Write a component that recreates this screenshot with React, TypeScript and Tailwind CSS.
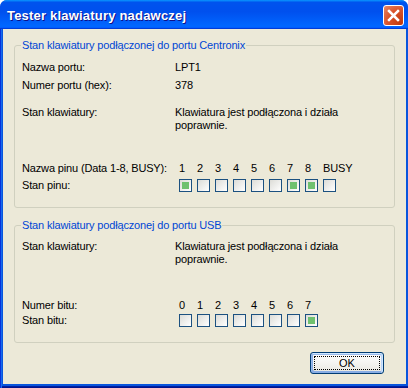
import React from "react";

function Box({ on }: { on: boolean }) {
  return (
    <div className="w-[13px] h-[13px] border border-[#1c5180] bg-[linear-gradient(135deg,#dcdcd7,#ffffff)] flex items-center justify-center">
      {on && <div className="w-[7px] h-[7px] bg-[#6fc16f]" />}
    </div>
  );
}

const pins = [
  { n: "1", on: true },
  { n: "2", on: false },
  { n: "3", on: false },
  { n: "4", on: false },
  { n: "5", on: false },
  { n: "6", on: false },
  { n: "7", on: true },
  { n: "8", on: true },
  { n: "BUSY", on: false },
];

const bits = [
  { n: "0", on: false },
  { n: "1", on: false },
  { n: "2", on: false },
  { n: "3", on: false },
  { n: "4", on: false },
  { n: "5", on: false },
  { n: "6", on: false },
  { n: "7", on: true },
];

function CellRow({ label, items, mode }: { label: string; items: { n: string; on: boolean }[]; mode: "names" | "boxes" }) {
  return (
    <div className="flex items-center h-[13px]">
      <div className="w-[157px] shrink-0 whitespace-nowrap">{label}</div>
      {items.map((it, i) => (
        <div key={i} className="w-[18px] shrink-0 whitespace-nowrap">
          {mode === "names" ? it.n : <Box on={it.on} />}
        </div>
      ))}
    </div>
  );
}

function Group({ title, heightClass, children, mtClass }: { title: string; heightClass: string; children: React.ReactNode; mtClass: string }) {
  return (
    <div className={`relative mx-[11px] ${mtClass} ${heightClass} border border-[#d0d0bf] rounded-[3px] pl-[7px]`}>
      <div className="absolute left-[6px] -top-[7px] px-[1px] bg-[#ece9d8] text-[#0046d5] leading-[13px] whitespace-nowrap">
        {title}
      </div>
      {children}
    </div>
  );
}

export default function App() {
  return (
    <div
      className="w-[408px] h-[388px] flex flex-col rounded-t-[7px] overflow-hidden bg-[#0855dd] text-black"
      style={{ fontFamily: '"Liberation Sans", Arial, sans-serif' }}
    >
      <div className="h-[29px] shrink-0 flex items-start bg-[linear-gradient(180deg,#0997ff,#0053ee_8%,#0050ee_40%,#0066ff_88%,#0066ff_93%,#005bff_95%,#003dd7_96%,#003dd7)]">
        <div className="pl-[7px] mt-[8px] leading-[15px] text-[13px] font-bold tracking-[0.2px] text-white [text-shadow:1px_1px_#0f1089] whitespace-nowrap">
          Tester klawiatury nadawczej
        </div>
        <div className="ml-auto mr-[4px] mt-[5px] w-[21px] h-[21px] rounded-[3px] border border-white bg-[radial-gradient(circle_at_90%_90%,#c23a0c_0%,#d9532a_55%,#df6a45_75%,#e98a6c_100%)] flex items-center justify-center">
          <svg width="19" height="19" viewBox="0 0 19 19">
            <path d="M5 5 L14 14 M14 5 L5 14" stroke="#ffffff" strokeWidth="2.5" strokeLinecap="square" />
          </svg>
        </div>
      </div>
      <div className="flex-1 flex pl-[3px] pr-[2px] pb-[4px] shadow-[inset_1px_0_#0831d9,inset_2px_0_#166aee,inset_0_-1px_#00138c,inset_0_-2px_#001ea0]">
        <div className="flex-1 flex flex-col bg-[#ece9d8] text-[11px] leading-[13px] tracking-[-0.15px]">
          <Group title="Stan klawiatury podłączonej do portu Centronix" heightClass="h-[163px]" mtClass="mt-[16px]">
            <div className="pt-[15px] flex flex-col">
              <div className="flex">
                <div className="w-[153px] shrink-0">Nazwa portu:</div>
                <div>LPT1</div>
              </div>
              <div className="flex mt-[5px]">
                <div className="w-[153px] shrink-0">Numer portu (hex):</div>
                <div>378</div>
              </div>
              <div className="flex mt-[14px]">
                <div className="w-[153px] shrink-0">Stan klawiatury:</div>
                <div className="whitespace-nowrap">
                  Klawiatura jest podłączona i działa
                  <br />
                  poprawnie.
                </div>
              </div>
              <div className="mt-[30px]">
                <CellRow label="Nazwa pinu (Data 1-8, BUSY):" items={pins} mode="names" />
              </div>
              <div className="mt-[4px]">
                <CellRow label="Stan pinu:" items={pins} mode="boxes" />
              </div>
            </div>
          </Group>
          <Group title="Stan klawiatury podłączonej do portu USB" heightClass="h-[118px]" mtClass="mt-[17px]">
            <div className="pt-[14px] flex flex-col">
              <div className="flex">
                <div className="w-[153px] shrink-0">Stan klawiatury:</div>
                <div className="whitespace-nowrap">
                  Klawiatura jest podłączona i działa
                  <br />
                  poprawnie.
                </div>
              </div>
              <div className="mt-[33px]">
                <CellRow label="Numer bitu:" items={bits} mode="names" />
              </div>
              <div className="mt-[2px]">
                <CellRow label="Stan bitu:" items={bits} mode="boxes" />
              </div>
            </div>
          </Group>
          <div className="flex justify-end pr-[22px] mt-[9px]">
            <button className="relative w-[74px] h-[22px] rounded-[3px] border border-[#003c74] bg-[linear-gradient(180deg,#ffffff,#ecebe6_86%,#d6d0c5)] shadow-[inset_-1px_1px_#cee7ff,inset_1px_2px_#98b8ea,inset_-2px_2px_#bcd4f6,inset_1px_-1px_#89ade4,inset_2px_-2px_#89ade4] flex items-center justify-center text-[11px] tracking-normal">
              <span className="absolute inset-[3px] border border-dotted border-black" />
              <span className="relative">OK</span>
            </button>
          </div>
        </div>
      </div>
    </div>
  );
}
